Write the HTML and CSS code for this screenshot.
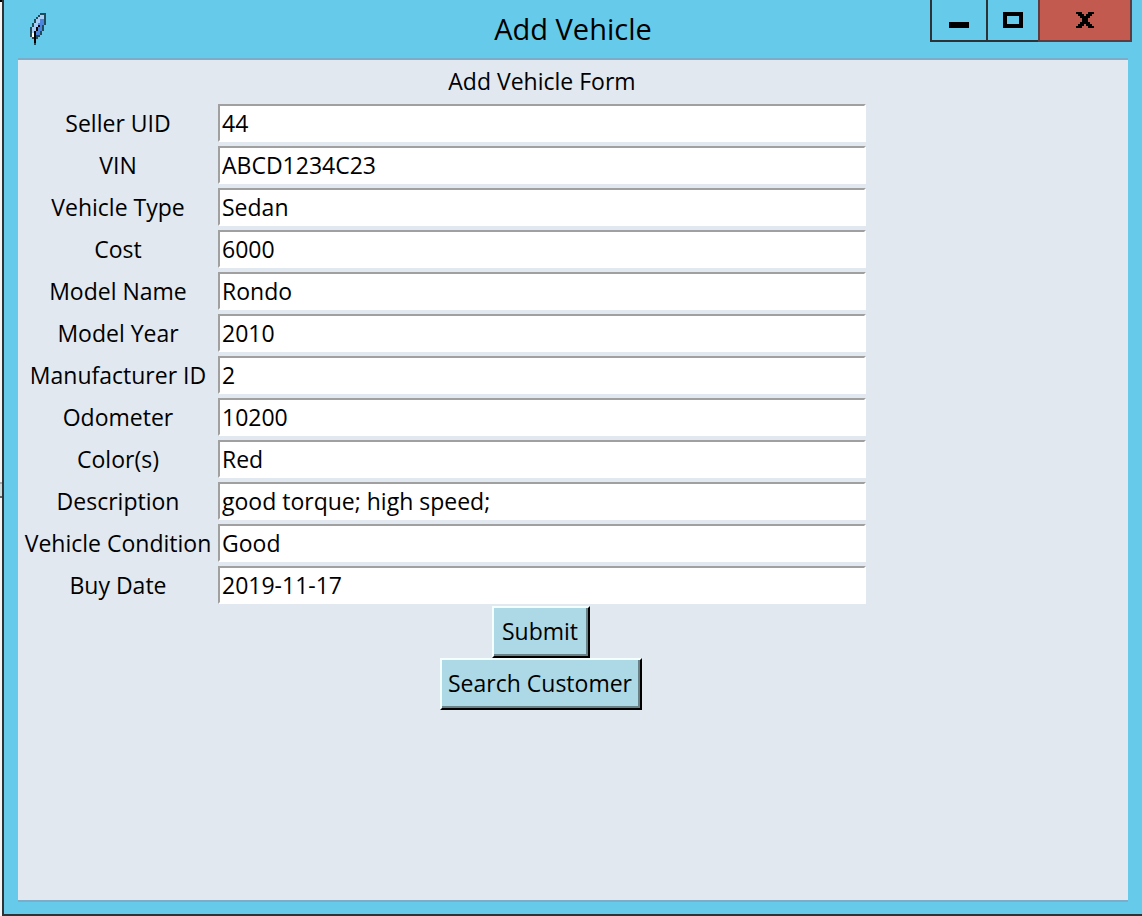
FILE: index.html
```html
<!DOCTYPE html>
<html lang="en">
<head>
<meta charset="utf-8">
<title>Add Vehicle</title>
<link rel="stylesheet" href="styles.css">
</head>
<body>
<div class="backdrop"><div class="backdrop-bar"></div></div>
<main class="window">
  <header class="titlebar">
    <svg class="feather" viewBox="0 0 8 16" shape-rendering="crispEdges" aria-hidden="true">
      <path fill="#234a59" d="M5 0h3v6H7v3H6v2H5v1H4v1H3v3H2v-3H1v-1H0V7h1V5h1V3h1V2h1V1h1z"/>
      <path fill="#a6cdf5" d="M5 1h2v2H5v2H4v2H3v2H2v3H1V7h1V5h1V3h1V2h1z"/>
      <path fill="#4c86dc" d="M5 3h2v3H6v3H5v2H3V8h1V5h1z"/>
      <path fill="#fff" d="M1 10h1v2H1z"/>
      <path fill="#000" d="M4 6h1v1H4v2H3v6H2V9h1V7h1z"/>
    </svg>
    <h1 class="title">Add Vehicle</h1>
    <div class="controls">
      <button class="control minimize" type="button" aria-label="Minimize">
        <svg width="20" height="16" viewBox="0 0 20 16" shape-rendering="crispEdges"><path d="M0 10h20v6H0z"/></svg>
      </button>
      <button class="control maximize" type="button" aria-label="Maximize">
        <svg width="20" height="16" viewBox="0 0 20 16" shape-rendering="crispEdges"><path fill-rule="evenodd" d="M0 0h20v16H0zM4 4v8h12V4z"/></svg>
      </button>
      <button class="control close" type="button" aria-label="Close">
        <svg width="18" height="16" viewBox="0 0 18 16" shape-rendering="crispEdges"><path d="M0 0h6v2h2v2h2V2h2V0h6v2h-2v2h-2v2h-2v4h2v2h2v2h2v2h-6v-2h-2v-2H8v2H6v2H0v-2h2v-2h2v-2h2V6H4V4H2V2H0z"/></svg>
      </button>
    </div>
  </header>
  <form class="client">
    <h2 class="heading">Add Vehicle Form</h2>
    <label class="label" for="seller">Seller UID</label><input class="entry" id="seller" type="text" value="44">
    <label class="label" for="vin">VIN</label><input class="entry" id="vin" type="text" value="ABCD1234C23">
    <label class="label" for="type">Vehicle Type</label><input class="entry" id="type" type="text" value="Sedan">
    <label class="label" for="cost">Cost</label><input class="entry" id="cost" type="text" value="6000">
    <label class="label" for="model">Model Name</label><input class="entry" id="model" type="text" value="Rondo">
    <label class="label" for="year">Model Year</label><input class="entry" id="year" type="text" value="2010">
    <label class="label" for="maker">Manufacturer ID</label><input class="entry" id="maker" type="text" value="2">
    <label class="label" for="odometer">Odometer</label><input class="entry" id="odometer" type="text" value="10200">
    <label class="label" for="colors">Color(s)</label><input class="entry" id="colors" type="text" value="Red">
    <label class="label" for="description">Description</label><input class="entry" id="description" type="text" value="good torque; high speed;">
    <label class="label" for="condition">Vehicle Condition</label><input class="entry" id="condition" type="text" value="Good">
    <label class="label" for="date">Buy Date</label><input class="entry" id="date" type="text" value="2019-11-17">
    <div class="actions">
      <button class="action" type="button">Submit</button>
      <button class="action" type="button">Search Customer</button>
    </div>
  </form>
</main>
</body>
</html>
```
FILE: styles.css
```css
* { box-sizing: border-box; }
body {
  margin: 0;
  min-height: 100vh;
  display: flex;
  background: #fff;
  color: #000;
  font: 23px/30px "Open Sans", "Noto Sans", sans-serif;
}
.backdrop {
  width: 2px;
  display: flex;
  align-items: flex-start;
  border-top: 2px solid #000;
  background: #f4f4f4;
}
.backdrop-bar {
  width: 2px;
  height: 16px;
  margin-top: 480px;
  background: #d0dddd;
  border-top: 2px solid #aaa;
  border-bottom: 2px solid #666;
}
.window {
  flex: 1;
  min-width: 0;
  display: flex;
  flex-direction: column;
  padding: 0 14px 12px;
  background: #66caea;
  border-left: 2px solid #2d3237;
  border-bottom: 2px solid #2d3237;
}
.titlebar {
  height: 58px;
  display: grid;
  grid-template-columns: 198px 1fr 202px;
  align-items: center;
  margin-right: -4px;
}
.feather {
  width: 16px;
  height: 32px;
  margin-left: 12px;
}
.title {
  margin: 0;
  font-size: 29px;
  font-weight: 400;
  text-align: center;
}
.controls {
  align-self: start;
  display: flex;
  height: 42px;
}
.control {
  display: flex;
  align-items: center;
  justify-content: center;
  padding: 0;
  border: 2px solid #2d3237;
  border-top: 0;
  border-right: 0;
  background: #66caea;
}
.minimize { width: 56px; }
.maximize { width: 52px; }
.close {
  width: 94px;
  background: #c35a50;
  border-color: #5a3c41;
  border-right: 2px solid #5a3c41;
}
.client {
  flex: 1;
  display: grid;
  grid-template-columns: 200px minmax(0, 648px);
  grid-auto-rows: min-content;
  align-content: start;
  background: #e1e8f0;
  border-top: 2px solid #7badc8;
  border-bottom: 2px solid #7badc8;
}
.heading {
  grid-column: 2;
  margin: 0;
  font-size: 23px;
  font-weight: 400;
  line-height: 42px;
  text-align: center;
}
.label {
  line-height: 42px;
  text-align: center;
  white-space: nowrap;
}
.entry {
  width: 100%;
  height: 38px;
  margin: 2px 0;
  padding: 0 2px;
  border: 2px solid;
  border-color: #a0a0a0 #fff #fff #a0a0a0;
  border-radius: 0;
  outline: 0;
  background: #fff;
  color: #000;
  font: inherit;
}
.actions {
  grid-column: 2;
  display: flex;
  flex-direction: column;
  align-items: center;
  padding-right: 2px;
}
.action {
  height: 52px;
  min-width: 98px;
  padding: 0 8px 2px 6px;
  border: 2px solid;
  border-color: #f4ffff #000 #000 #f4ffff;
  border-radius: 0;
  background: #add8e6;
  box-shadow: inset -2px -2px #698288;
  color: #000;
  font: inherit;
}
```
